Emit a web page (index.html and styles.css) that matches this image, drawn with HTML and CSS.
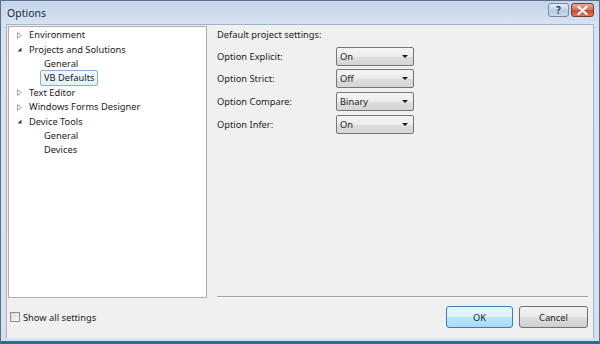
FILE: index.html
```html
<!DOCTYPE html>
<html lang="en">
<head>
    <meta charset="UTF-8">
    <title>Options</title>
    <link rel="stylesheet" href="styles.css">
</head>
<body>
    <div class="window">
        <div class="titlebar">
            <span class="title">Options</span>
            <div class="caption-buttons">
                <div class="cap-btn help">?</div>
                <div class="cap-btn close">
                    <svg width="11" height="9" viewBox="0 0 11 9"><path d="M1.5 1 L9.5 8 M9.5 1 L1.5 8" stroke="#fff" stroke-width="2.2" stroke-linecap="round"/></svg>
                </div>
            </div>
        </div>

        <div class="client">
            <div class="content">
                <div class="tree">
                    <div class="node">
                        <span class="arrow"><svg width="5" height="7" viewBox="0 0 5 7"><path d="M0.5 0.5 L4.2 3.5 L0.5 6.5 Z" fill="none" stroke="#a0a0a0"/></svg></span>
                        <span class="text">Environment</span>
                    </div>
                    <div class="node">
                        <span class="arrow"><svg width="5" height="7" viewBox="0 0 5 7"><path d="M4.5 1.5 L4.5 5.5 L0.5 5.5 Z" fill="#3a3a3a"/></svg></span>
                        <span class="text">Projects and Solutions</span>
                    </div>
                    <div class="node child"><span class="text">General</span></div>
                    <div class="node child"><span class="text selected">VB Defaults</span></div>
                    <div class="node">
                        <span class="arrow"><svg width="5" height="7" viewBox="0 0 5 7"><path d="M0.5 0.5 L4.2 3.5 L0.5 6.5 Z" fill="none" stroke="#a0a0a0"/></svg></span>
                        <span class="text">Text Editor</span>
                    </div>
                    <div class="node">
                        <span class="arrow"><svg width="5" height="7" viewBox="0 0 5 7"><path d="M0.5 0.5 L4.2 3.5 L0.5 6.5 Z" fill="none" stroke="#a0a0a0"/></svg></span>
                        <span class="text">Windows Forms Designer</span>
                    </div>
                    <div class="node">
                        <span class="arrow"><svg width="5" height="7" viewBox="0 0 5 7"><path d="M4.5 1.5 L4.5 5.5 L0.5 5.5 Z" fill="#3a3a3a"/></svg></span>
                        <span class="text">Device Tools</span>
                    </div>
                    <div class="node child"><span class="text">General</span></div>
                    <div class="node child"><span class="text">Devices</span></div>
                </div>

                <div class="settings">
                    <div class="heading">Default project settings:</div>
                    <div class="row">
                        <span class="label">Option Explicit:</span>
                        <div class="combo"><span>On</span><span class="drop"></span></div>
                    </div>
                    <div class="row">
                        <span class="label">Option Strict:</span>
                        <div class="combo"><span>Off</span><span class="drop"></span></div>
                    </div>
                    <div class="row">
                        <span class="label">Option Compare:</span>
                        <div class="combo"><span>Binary</span><span class="drop"></span></div>
                    </div>
                    <div class="row">
                        <span class="label">Option Infer:</span>
                        <div class="combo"><span>On</span><span class="drop"></span></div>
                    </div>
                    <div class="separator"></div>
                </div>
            </div>

            <div class="footer">
                <label class="check">
                    <span class="box"></span>
                    <span>Show all settings</span>
                </label>
                <div class="buttons">
                    <div class="btn default">OK</div>
                    <div class="btn">Cancel</div>
                </div>
            </div>
        </div>
        <div class="bottom-edge"></div>
    </div>
</body>
</html>
```

FILE: styles.css
```css
html, body {
    margin: 0;
    padding: 0;
}
body {
    font-family: "Noto Sans", "Liberation Sans", sans-serif;
    font-size: 9.3px;
    color: #222;
    width: 600px;
    height: 344px;
    overflow: hidden;
}
.window {
    width: 600px;
    height: 344px;
    box-sizing: border-box;
    border-left: 1px solid #5d7088;
    border-right: 1px solid #5d7088;
    background: linear-gradient(to bottom, #c3d4e9 0px, #d6e3f2 24px, #d3e0ee 100%);
    display: flex;
    flex-direction: column;
}
.titlebar {
    height: 24px;
    display: flex;
    align-items: flex-start;
    justify-content: space-between;
    padding: 0 5px 0 6px;
    border-top: 1px solid #5d7088;
    box-sizing: border-box;
}
.title {
    font-size: 10.5px;
    color: #1b2a3a;
    margin-top: 5px;
}
.caption-buttons {
    display: flex;
    gap: 2px;
    margin-top: 2px;
}
.cap-btn {
    height: 14px;
    border: 1px solid #7689a3;
    border-radius: 3px;
    display: flex;
    align-items: center;
    justify-content: center;
    box-sizing: border-box;
}
.help {
    width: 21px;
    background: linear-gradient(to bottom, #e4edf7, #c2d3e8 50%, #b5c9e2 51%, #cbdbee);
    color: #2a3b55;
    font-weight: bold;
    font-size: 10px;
}
.close {
    width: 23px;
    border-color: #7a3a30;
    background: linear-gradient(to bottom, #e9a99a, #d4705b 50%, #c54a32 51%, #d8785c);
}
.client {
    flex: 1;
    margin: 0 5px;
    background: #f0f0f0;
    border: 1px solid #a3b3c6;
    border-bottom: none;
    padding: 1px 5px 0 1px;
    display: flex;
    flex-direction: column;
}
.content {
    display: flex;
    gap: 10px;
}
.tree {
    width: 199px;
    height: 272px;
    box-sizing: border-box;
    border: 1px solid #adadad;
    background: #fff;
    padding-top: 1px;
}
.node {
    height: 14.4px;
    display: flex;
    align-items: center;
    padding-left: 8px;
}
.node .arrow {
    width: 9px;
    display: flex;
    align-items: center;
}
.node.child {
    padding-left: 32px;
}
.text {
    padding: 0 3px;
    line-height: 14px;
    white-space: nowrap;
}
.selected {
    border: 1px solid #84acdd;
    border-radius: 2px;
    background: linear-gradient(to bottom, #f4f9fe, #e6f0fb);
    line-height: 14px;
    margin-left: -1px;
}
.settings {
    flex: 1;
    display: flex;
    flex-direction: column;
    padding-top: 1px;
}
.heading {
    height: 15px;
    line-height: 15px;
    margin-bottom: 3px;
}
.row {
    display: flex;
    align-items: center;
    height: 22.6px;
}
.label {
    width: 119px;
}
.combo {
    width: 78px;
    height: 19px;
    box-sizing: border-box;
    border: 1px solid #767676;
    border-radius: 2px;
    background: linear-gradient(to bottom, #f5f5f5, #ececec 50%, #dddddd 51%, #d5d5d5);
    display: flex;
    align-items: center;
    justify-content: space-between;
    padding: 0 5px 0 3px;
}
.drop {
    width: 0;
    height: 0;
    border-left: 3px solid transparent;
    border-right: 3px solid transparent;
    border-top: 3px solid #1a1a1a;
}
.separator {
    margin-top: auto;
    height: 1px;
    background: #a0a0a0;
    border-bottom: 1px solid #ffffff;
}
.footer {
    flex: 1;
    display: flex;
    align-items: center;
    justify-content: space-between;
    padding-left: 2px;
    padding-bottom: 2px;
}
.check {
    display: flex;
    align-items: center;
    gap: 3px;
}
.box {
    width: 10px;
    height: 10px;
    box-sizing: border-box;
    border: 1px solid #8e8f8f;
    background: linear-gradient(135deg, #dcdcdc, #f8f8f8);
}
.buttons {
    display: flex;
    gap: 6px;
}
.btn {
    width: 69px;
    height: 22px;
    box-sizing: border-box;
    border: 1px solid #707070;
    border-radius: 3px;
    background: linear-gradient(to bottom, #f2f2f2, #ebebeb 50%, #dddddd 51%, #cfcfcf);
    display: flex;
    align-items: center;
    justify-content: center;
}
.btn.default {
    width: 67px;
    border-color: #3c7fb1;
    background: linear-gradient(to bottom, #eaf6fd, #d9f0fc 50%, #bee6fd 51%, #a7d9f5);
}
.bottom-edge {
    height: 3px;
    margin-top: 3px;
    background: #2f6e8c;
}
```
